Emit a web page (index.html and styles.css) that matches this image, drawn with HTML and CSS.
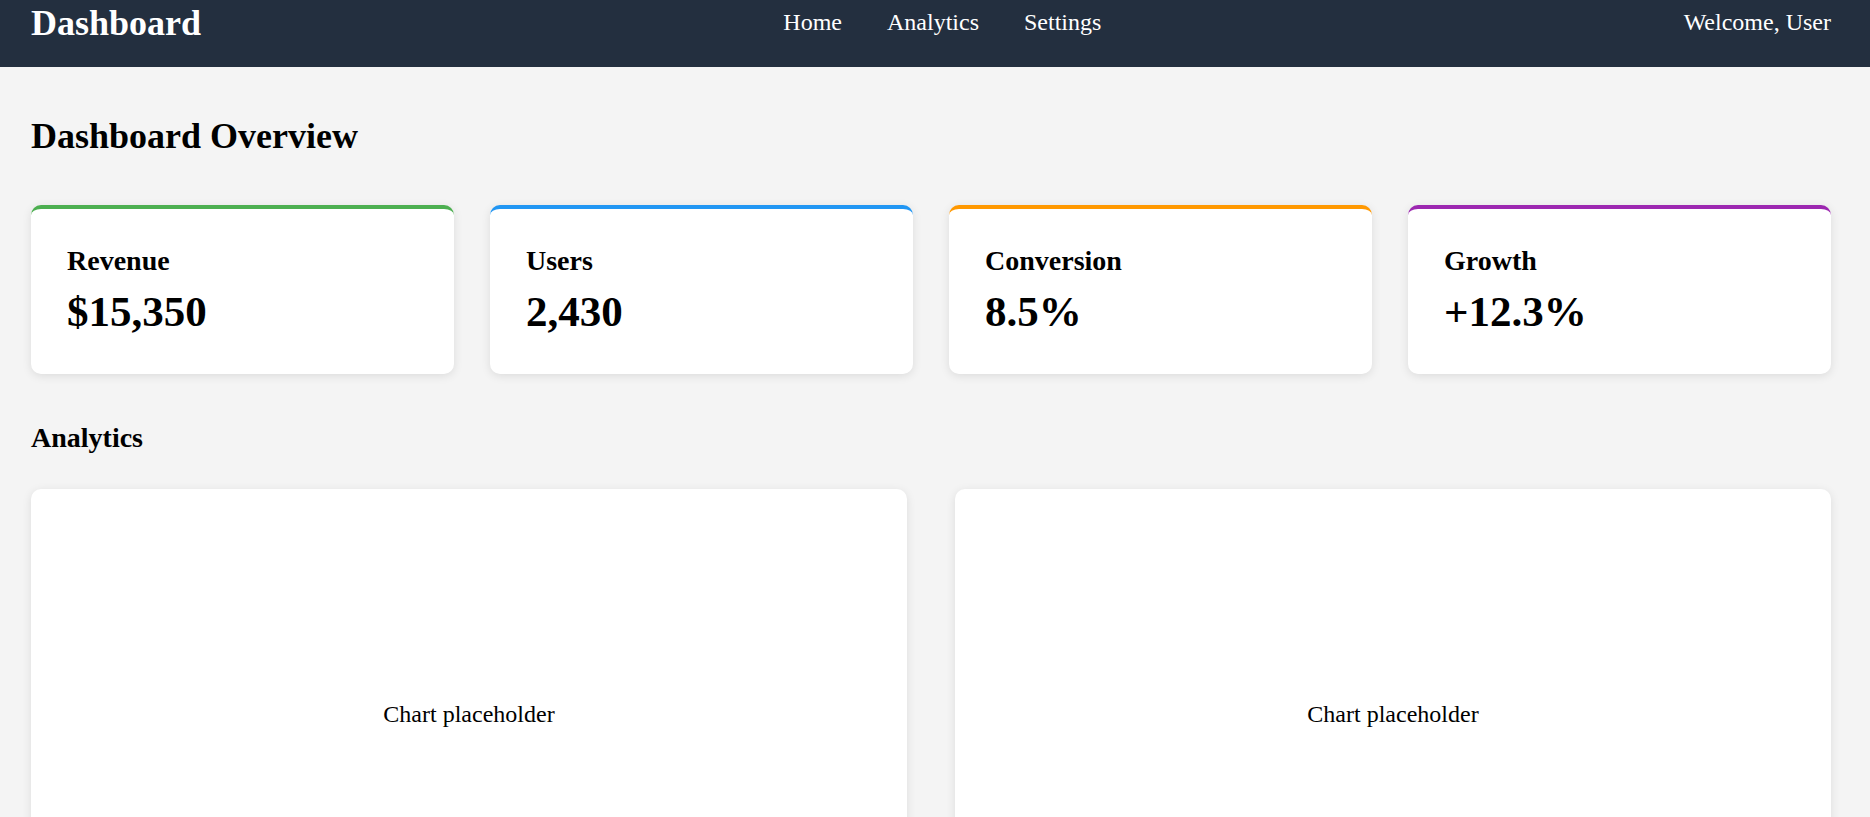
FILE: index.html
```html
<!DOCTYPE html>
<html lang="en">
<head>
<meta charset="utf-8">
<title>Dashboard</title>
<link rel="stylesheet" href="styles.css">
</head>
<body>
<header class="topbar">
  <h1 class="brand">Dashboard</h1>
  <nav class="nav">
    <a href="#">Home</a>
    <a href="#">Analytics</a>
    <a href="#">Settings</a>
  </nav>
  <div class="user">Welcome, User</div>
</header>
<main class="main">
  <h1 class="page-title">Dashboard Overview</h1>
  <section class="stats">
    <div class="stat stat-green"><h3>Revenue</h3><p class="value">$15,350</p></div>
    <div class="stat stat-blue"><h3>Users</h3><p class="value">2,430</p></div>
    <div class="stat stat-orange"><h3>Conversion</h3><p class="value">8.5%</p></div>
    <div class="stat stat-purple"><h3>Growth</h3><p class="value">+12.3%</p></div>
  </section>
  <h2 class="section-title">Analytics</h2>
  <section class="charts">
    <div class="chart">Chart placeholder</div>
    <div class="chart">Chart placeholder</div>
  </section>
</main>
</body>
</html>
```
FILE: styles.css
```css
html, body {
  margin: 0;
  padding: 0;
}
body {
  background: #f4f4f4;
  font-family: "Liberation Serif", "Times New Roman", serif;
  color: #000;
}
.topbar {
  background: #232f3f;
  color: #fff;
  display: flex;
  align-items: center;
  justify-content: space-between;
  height: 45px;
  padding: 0 39px 22px 31px;
}
.brand {
  margin: 0;
  font-size: 36px;
  font-weight: bold;
  line-height: 40px;
}
.nav {
  display: flex;
  gap: 45px;
}
.nav a {
  color: #fff;
  text-decoration: none;
  font-size: 24px;
}
.user {
  font-size: 24px;
}
.main {
  padding: 49px 39px 0 31px;
}
.page-title {
  margin: 0 0 49px;
  font-size: 36px;
  line-height: 40px;
  font-weight: bold;
}
.stats {
  display: grid;
  grid-template-columns: repeat(4, 1fr);
  gap: 36px;
}
.stat {
  background: #fff;
  border-radius: 10px;
  border-top: 4px solid #4caf50;
  padding: 36px 36px 38px;
  box-shadow: 0 2px 10px rgba(0, 0, 0, 0.1);
}
.stat-green { border-top-color: #4caf50; }
.stat-blue { border-top-color: #2196f3; }
.stat-orange { border-top-color: #ff9800; }
.stat-purple { border-top-color: #9c27b0; }
.stat h3 {
  margin: 0 0 12px;
  font-size: 28px;
  line-height: 31px;
  font-weight: bold;
}
.value {
  margin: 0;
  font-size: 43px;
  line-height: 48px;
  font-weight: bold;
}
.section-title {
  margin: 48px 0 36px;
  font-size: 28px;
  line-height: 31px;
  font-weight: bold;
}
.charts {
  display: grid;
  grid-template-columns: 1fr 1fr;
  gap: 48px;
}
.chart {
  background: #fff;
  border-radius: 10px;
  height: 450px;
  display: flex;
  align-items: center;
  justify-content: center;
  font-size: 24px;
  box-shadow: 0 2px 10px rgba(0, 0, 0, 0.1);
}
```
